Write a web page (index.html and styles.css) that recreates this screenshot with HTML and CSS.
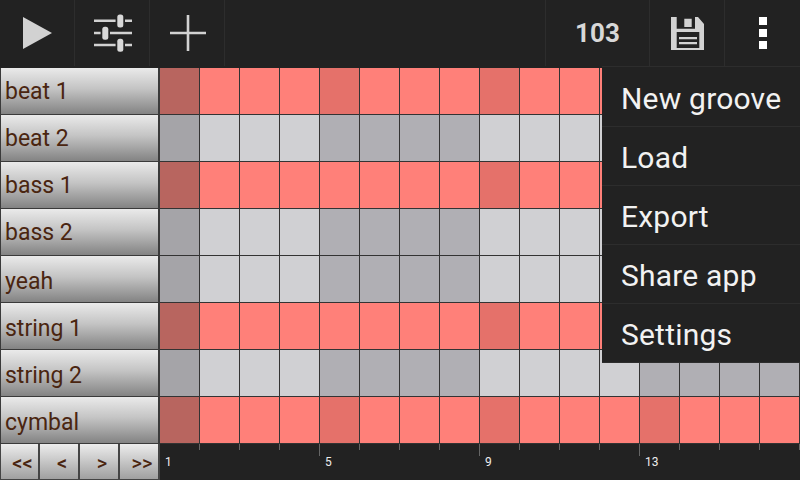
FILE: index.html
```html
<!DOCTYPE html>
<html lang="en">
<head>
<meta charset="utf-8">
<title>Groove</title>
<link rel="stylesheet" href="styles.css">
</head>
<body>
<div class="app">
  <header class="toolbar">
    <button class="tool" aria-label="Play"><svg width="29" height="32" viewBox="0 0 29 32"><path class="ico" d="M0 0 L29 16 L0 32 Z"/></svg></button>
    <button class="tool tool-shift" aria-label="Mixer"><svg width="38" height="38" viewBox="0 0 38 38"><path class="line" d="M0 6.7H38M0 19H38M0 31H38"/><rect class="knob" x="23.3" y="0.5" width="6" height="13" rx="2.5"/><rect class="knob" x="8.3" y="12.7" width="6" height="13" rx="2.5"/><rect class="knob" x="23.3" y="24.7" width="6" height="13" rx="2.5"/></svg></button>
    <button class="tool tool-shift" aria-label="Add"><svg width="36" height="36" viewBox="0 0 36 36"><path class="line" d="M18 0V36M0 18H36"/></svg></button>
    <div class="spacer"></div>
    <div class="tool tool-tempo">103</div>
    <button class="tool" aria-label="Save"><svg width="33" height="33" viewBox="0 0 33 33"><path class="ico" fill-rule="evenodd" d="M0 0H5.7V11.7H24V0H27L33 7V33H0Z M5.7 15V31H28.3V15Z"/><path class="ico" d="M13.3 1.7H20.7V10H13.3Z M8 20H26V22.3H8Z M8 25H26V27.3H8Z"/></svg></button>
    <button class="tool tool-more" aria-label="More"><span class="dot"></span><span class="dot"></span><span class="dot"></span></button>
  </header>
  <main class="main">
    <section class="tracks">
      <div class="track"><div class="name">beat 1</div><div class="cells pink m4 m8 m12">
        <i class="p"></i><i></i><i></i><i></i><i></i><i></i><i></i><i></i><i></i><i></i><i></i><i></i><i></i><i></i><i></i><i></i></div></div>
      <div class="track"><div class="name">beat 2</div><div class="cells grey">
        <i class="p"></i><i></i><i></i><i></i><i></i><i></i><i></i><i></i><i></i><i></i><i></i><i></i><i></i><i></i><i></i><i></i></div></div>
      <div class="track"><div class="name">bass 1</div><div class="cells pink m8">
        <i class="p"></i><i></i><i></i><i></i><i></i><i></i><i></i><i></i><i></i><i></i><i></i><i></i><i></i><i></i><i></i><i></i></div></div>
      <div class="track"><div class="name">bass 2</div><div class="cells grey">
        <i class="p"></i><i></i><i></i><i></i><i></i><i></i><i></i><i></i><i></i><i></i><i></i><i></i><i></i><i></i><i></i><i></i></div></div>
      <div class="track"><div class="name name-low">yeah</div><div class="cells grey">
        <i class="p"></i><i></i><i></i><i></i><i></i><i></i><i></i><i></i><i></i><i></i><i></i><i></i><i></i><i></i><i></i><i></i></div></div>
      <div class="track"><div class="name name-low">string 1</div><div class="cells pink m8">
        <i class="p"></i><i></i><i></i><i></i><i></i><i></i><i></i><i></i><i></i><i></i><i></i><i></i><i></i><i></i><i></i><i></i></div></div>
      <div class="track"><div class="name name-low">string 2</div><div class="cells grey">
        <i class="p"></i><i></i><i></i><i></i><i></i><i></i><i></i><i></i><i></i><i></i><i></i><i></i><i></i><i></i><i></i><i></i></div></div>
      <div class="track"><div class="name name-low">cymbal</div><div class="cells pink m4 m8 m12">
        <i class="p"></i><i></i><i></i><i></i><i></i><i></i><i></i><i></i><i></i><i></i><i></i><i></i><i></i><i></i><i></i><i></i></div></div>
    </section>
    <footer class="bottom">
      <nav class="pager">
        <button class="page">&lt;&lt;</button>
        <button class="page">&lt;</button>
        <button class="page">&gt;</button>
        <button class="page">&gt;&gt;</button>
      </nav>
      <div class="ruler">
        <span class="tick bar"><b>1</b></span><span class="tick"></span><span class="tick"></span><span class="tick"></span>
        <span class="tick bar"><b>5</b></span><span class="tick"></span><span class="tick"></span><span class="tick"></span>
        <span class="tick bar"><b>9</b></span><span class="tick"></span><span class="tick"></span><span class="tick"></span>
        <span class="tick bar"><b>13</b></span><span class="tick"></span><span class="tick"></span><span class="tick"></span>
      </div>
    </footer>
  </main>
  <ul class="menu">
    <li>New groove</li>
    <li>Load</li>
    <li>Export</li>
    <li>Share app</li>
    <li>Settings</li>
  </ul>
</div>
</body>
</html>
```
FILE: styles.css
```css
* { box-sizing: border-box; margin: 0; padding: 0; }
html, body { width: 800px; height: 480px; overflow: hidden; }
body { background: #222; font-family: Roboto, sans-serif; }
.app { position: relative; width: 800px; height: 480px; display: flex; flex-direction: column; background: #222; }

.toolbar { flex: none; height: 68px; display: flex; align-items: stretch; padding-bottom: 2px; }
.tool { width: 75px; flex: none; background: none; border: 0; border-right: 1px solid #2d2d2d; padding: 0; display: flex; align-items: center; justify-content: center; color: #d8d8d8; }
.tool-shift { padding-left: 2px; }
.spacer { flex: 1; border-right: 1px solid #2d2d2d; }
.tool-tempo { width: 104px; font-size: 26px; font-weight: 700; }
.tool-more { border-right: 0; flex-direction: column; gap: 4px; padding-left: 1px; }
.dot { width: 8px; height: 8px; background: #fff; }
.ico { fill: #d2d2d2; }
.line { stroke: #d2d2d2; stroke-width: 2.6; fill: none; }
.knob { fill: #d8d8d8; stroke: #222; stroke-width: 3.4; paint-order: stroke; }

.main { flex: 1; display: flex; flex-direction: column; min-height: 0; }
.tracks { flex: none; display: flex; flex-direction: column; }
.track { height: 47px; display: flex; }
.name { width: 160px; height: 47px; padding-left: 4px; border: solid #3a3a3a; border-width: 0 2px 1px 1px; background: linear-gradient(#eaeaea, #c4c4c4 45%, #838383); color: #4a2510; font-size: 23px; line-height: 47px; }
.name-low { line-height: 51px; }

.cells { flex: 1; display: grid; grid-template-columns: repeat(16, 40px); }
.cells i { display: block; height: 47px; border-right: 1px solid #333; border-bottom: 1px solid #333; }
.pink i { background: #ff8079; }
.pink i.p { background: #b8655f; }
.m4 i:nth-child(5), .m8 i:nth-child(9), .m12 i:nth-child(13) { background: #e5716a; }
.grey i { background: #d0d0d3; }
.grey i.p { background: #a5a4a8; }
.grey i:nth-child(n+5):nth-child(-n+8), .grey i:nth-child(n+13) { background: #b0afb4; }

.bottom { flex: 1; display: flex; }
.pager { width: 160px; display: flex; }
.page { width: 40px; height: 36px; padding: 3px 0 0 6px; border: 0; border-right: 2px solid #444; border-bottom: 1px solid #444; background: linear-gradient(#ececec, #a0a0a0); color: #4a2510; font: 500 20px Roboto, sans-serif; }
.page:first-child { border-left: 1px solid #444; }
.ruler { flex: 1; display: grid; grid-template-columns: repeat(16, 40px); }
.tick { position: relative; }
.tick::before { content: ""; position: absolute; right: 0; top: 0; width: 1px; height: 6px; background: #666; }
.bar::after { content: ""; position: absolute; left: -1px; top: 0; width: 1px; height: 12px; background: #666; }
.bar:first-child::after { display: none; }
.tick b { display: block; padding: 11px 0 0 5px; font-size: 12px; line-height: 14px; font-weight: 400; color: #eee; }

.menu { position: absolute; left: 602px; top: 66px; width: 198px; height: 297px; list-style: none; background: #222; border-top: 1px solid #2d2d2d; border-bottom: 1px solid #2d2d2d; padding-top: 1px; }
.menu li { height: 59px; border-bottom: 1px solid #2d2d2d; padding-left: 19px; color: #f2f2f2; font-size: 30px; line-height: 62px; letter-spacing: .2px; }
.menu li:last-child { border-bottom: 0; }
```
